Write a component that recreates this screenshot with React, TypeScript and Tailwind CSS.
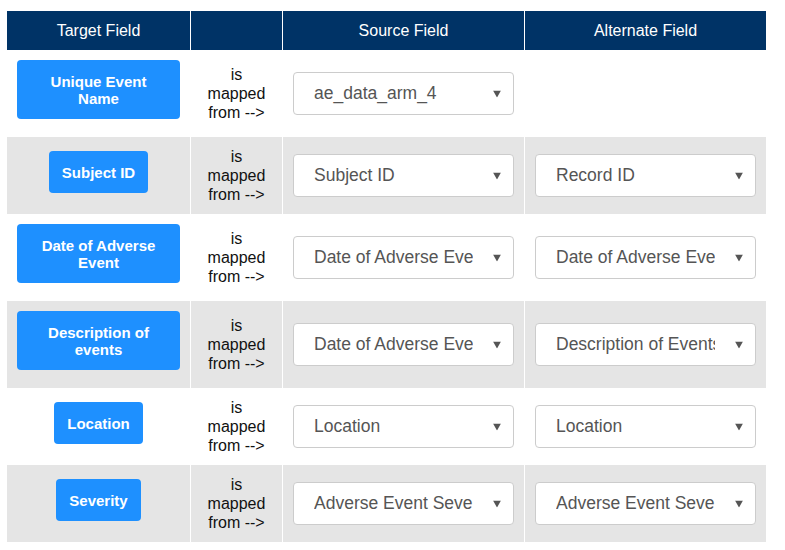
import React from "react";

type Row = {
  target: string[];
  source: string;
  alternate?: string;
};

const rows: Row[] = [
  { target: ["Unique Event", "Name"], source: "ae_data_arm_4" },
  { target: ["Subject ID"], source: "Subject ID", alternate: "Record ID" },
  {
    target: ["Date of Adverse", "Event"],
    source: "Date of Adverse Event",
    alternate: "Date of Adverse Event",
  },
  {
    target: ["Description of", "events"],
    source: "Date of Adverse Event",
    alternate: "Description of Events",
  },
  { target: ["Location"], source: "Location", alternate: "Location" },
  {
    target: ["Severity"],
    source: "Adverse Event Severity",
    alternate: "Adverse Event Severity",
  },
];

function FakeSelect({ value }: { value: string }) {
  return (
    <div className="relative flex h-[43px] w-full items-center rounded-[4px] border border-[#cccccc] bg-white pl-5 pr-[40px]">
      <span className="block overflow-hidden whitespace-nowrap text-[17.5px] text-[#555555]">
        {value}
      </span>
      <svg
        className="absolute right-[12px] top-1/2 -translate-y-1/2"
        width="8"
        height="7"
        viewBox="0 0 8 7"
      >
        <polygon points="0,0 8,0 4,7" fill="#555555" />
      </svg>
    </div>
  );
}

function TargetButton({ lines }: { lines: string[] }) {
  const wide = lines.length > 1;
  return (
    <div
      className={`mb-2 rounded-[4px] bg-[#1e90ff] px-[13px] pb-[12px] pt-[13px] text-center text-[15px] font-bold leading-[17px] text-white ${
        wide ? "w-full" : "w-fit"
      }`}
    >
      {lines.map((l, i) => (
        <div key={i}>{l}</div>
      ))}
    </div>
  );
}

export default function App() {
  return (
    <div
      className="min-h-[550px] bg-white pl-[7px] pt-[11px]"
      style={{ fontFamily: '"Liberation Sans", Arial, sans-serif' }}
    >
      <div className="w-[759px]">
        <div className="flex h-[39px] bg-[#003366] text-base text-white">
          <div className="flex w-[184px] items-center justify-center border-r border-white">
            Target Field
          </div>
          <div className="w-[92px] border-r border-white" />
          <div className="flex w-[242px] items-center justify-center border-r border-white">
            Source Field
          </div>
          <div className="flex w-[241px] items-center justify-center">
            Alternate Field
          </div>
        </div>
        {rows.map((row, i) => (
          <div
            key={i}
            className={`flex ${i % 2 === 1 ? "bg-[#e5e5e5]" : "bg-white"}`}
          >
            <div className="flex w-[184px] items-center justify-center border-r border-white px-[10px] py-[10px]">
              <TargetButton lines={row.target} />
            </div>
            <div className="flex w-[92px] items-center justify-center border-r border-white py-[10px] text-center text-base leading-[19px] text-[#111111]">
              <div>
                is
                <br />
                mapped
                <br />
                from --&gt;
              </div>
            </div>
            <div className="flex w-[242px] items-center border-r border-white px-[10px] py-[10px]">
              <FakeSelect value={row.source} />
            </div>
            <div className="flex w-[241px] items-center px-[10px] py-[10px]">
              {row.alternate && <FakeSelect value={row.alternate} />}
            </div>
          </div>
        ))}
      </div>
    </div>
  );
}
